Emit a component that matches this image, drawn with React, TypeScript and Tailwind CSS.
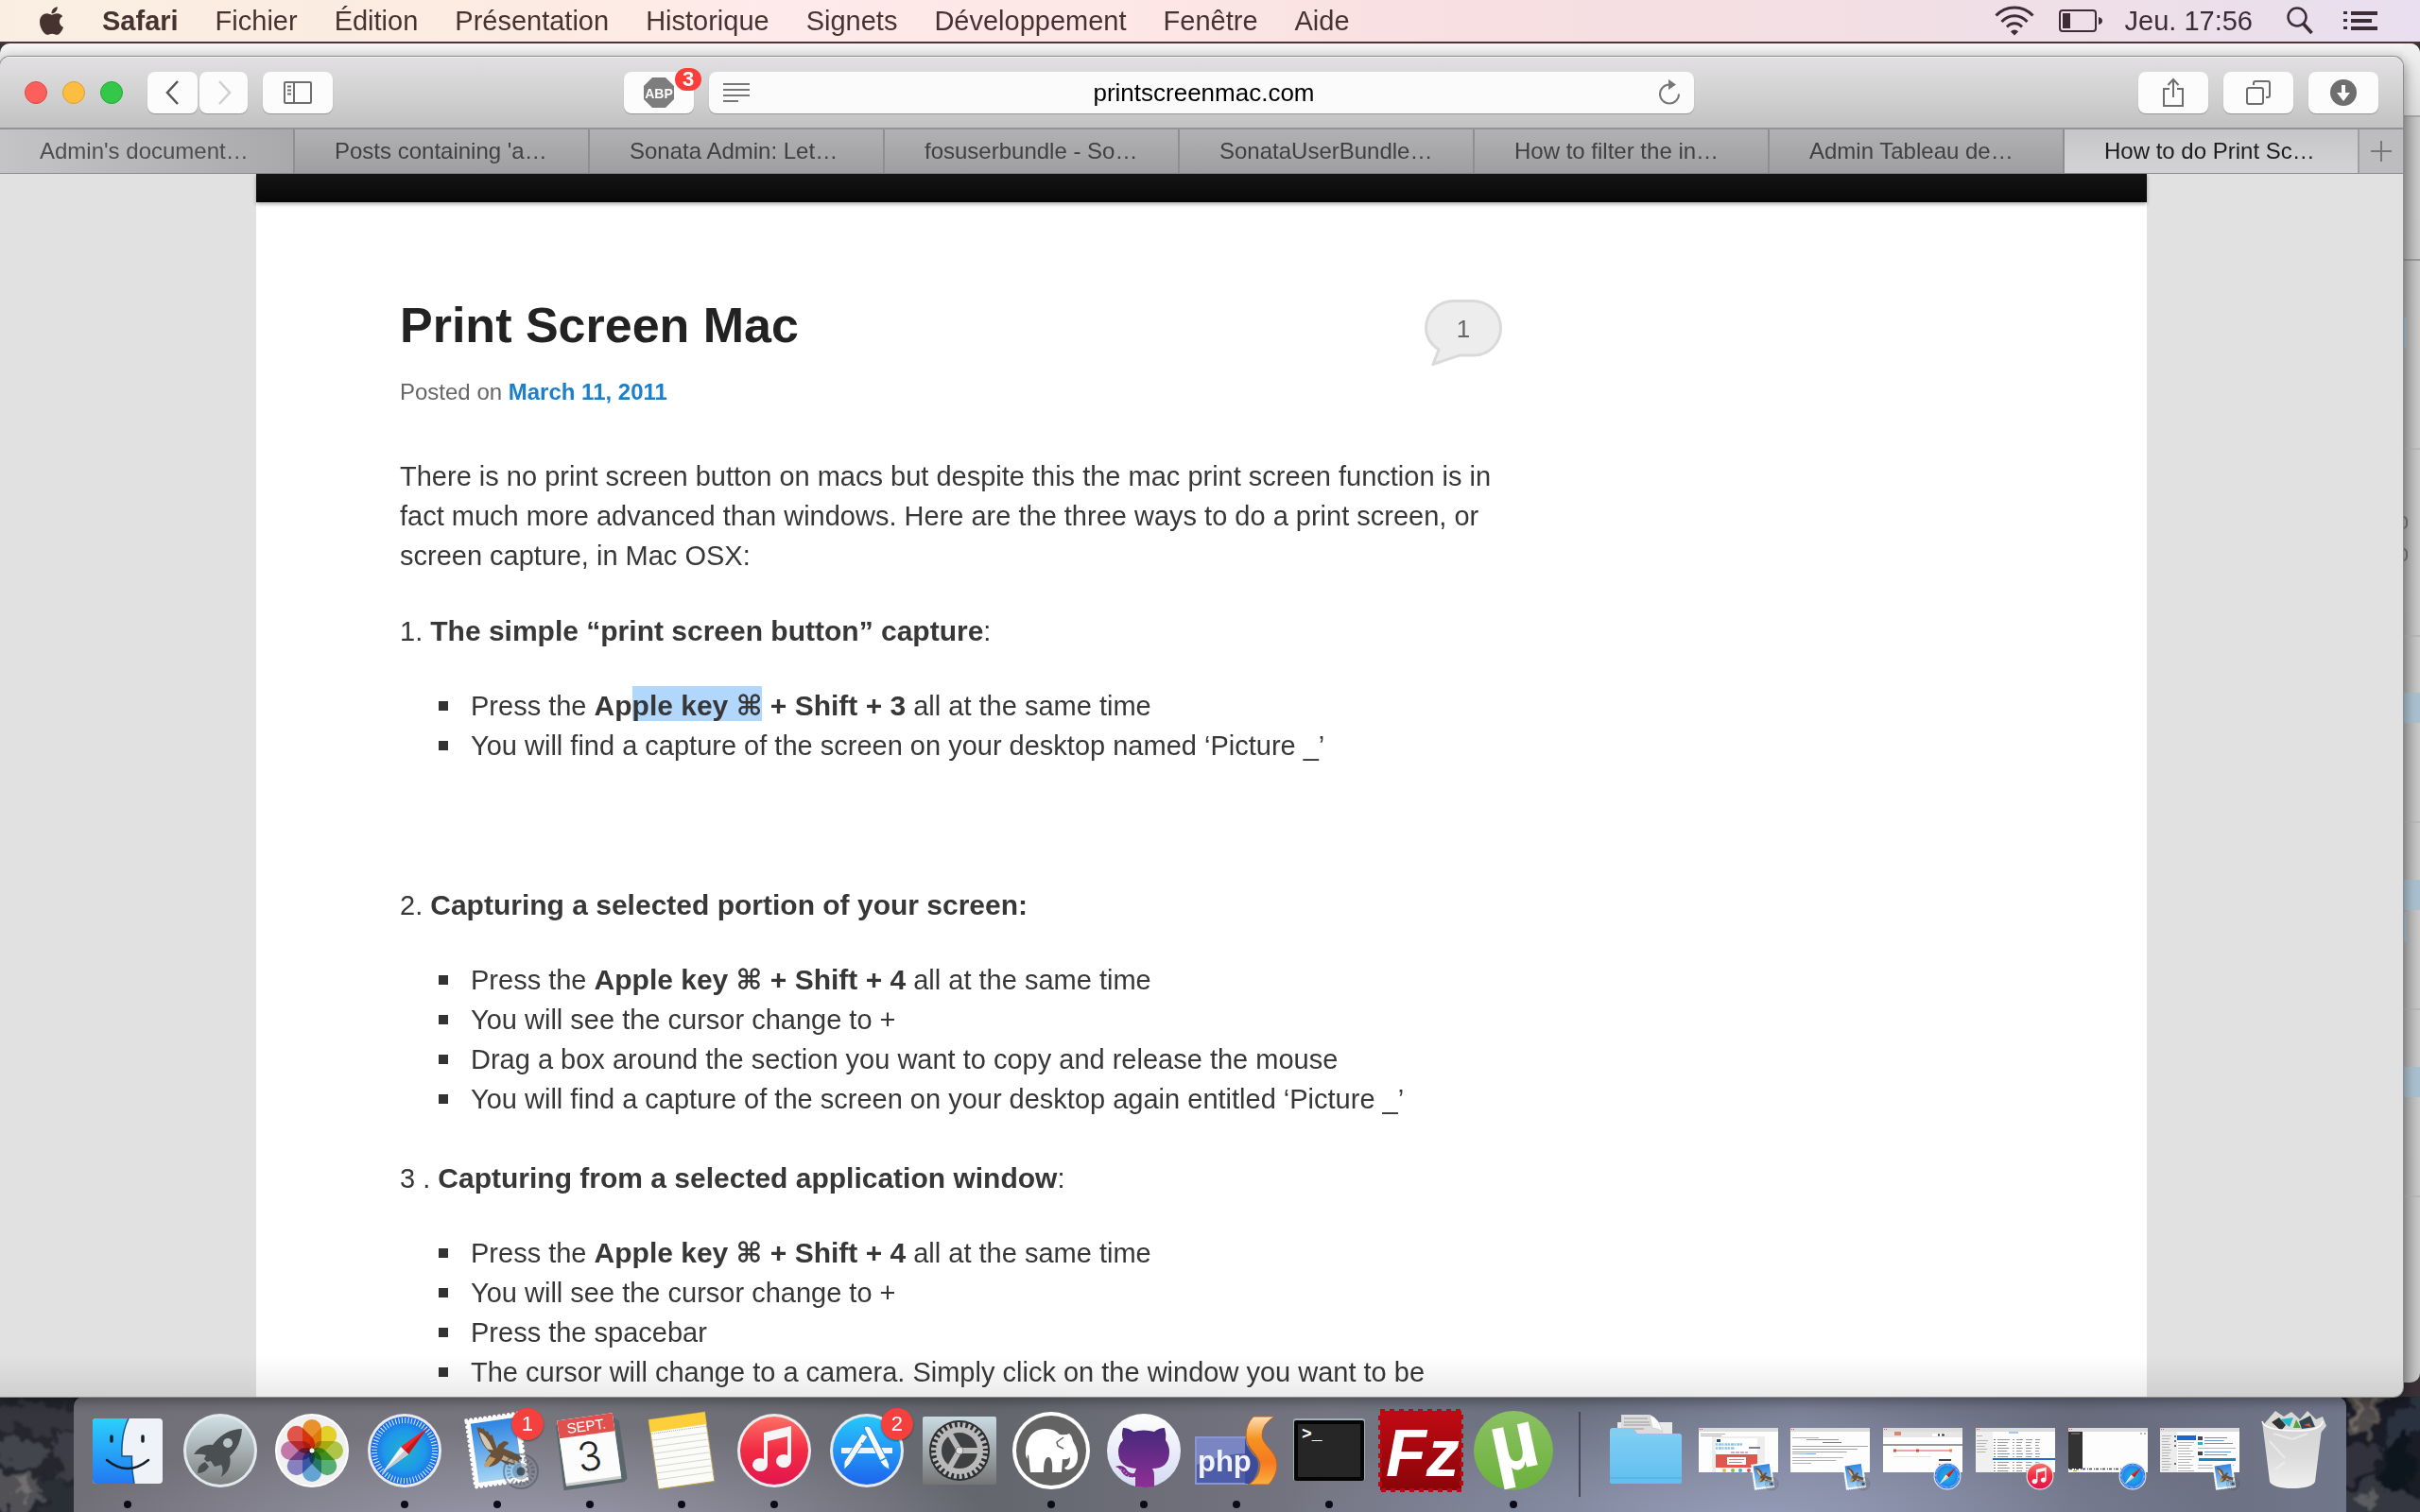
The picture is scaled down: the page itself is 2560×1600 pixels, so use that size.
import React from "react";
import { FaApple } from "react-icons/fa";

const MENUS = ["Fichier", "Édition", "Présentation", "Historique", "Signets", "Développement", "Fenêtre", "Aide"];

const TABS = [
  "Admin's document…",
  "Posts containing 'a…",
  "Sonata Admin: Let…",
  "fosuserbundle - So…",
  "SonataUserBundle…",
  "How to filter the in…",
  "Admin Tableau de…",
  "How to do Print Sc…",
];

/* ---------- Menu bar ---------- */

function MenuBar() {
  return (
    <header className="flex h-[46px] shrink-0 items-center justify-between border-b-2 border-[#4f3338] bg-[linear-gradient(90deg,#faeee2_0%,#fcebe2_22%,#feeaea_32%,#fde6e5_48%,#f8dfe1_60%,#f3dfe4_75%,#eedfe8_88%,#e8dff0_100%)] pl-[40px] pr-[45px] text-[29px] leading-none text-[#46332f]">
      <nav aria-label="Menus" className="flex items-center gap-[39px]">
        <button aria-label="Apple">
          <FaApple className="h-[34px] w-[29px]" />
        </button>
        <button className="font-bold">Safari</button>
        {MENUS.map((m) => (
          <button key={m}>{m}</button>
        ))}
      </nav>
      <div className="flex items-center text-[#3d2c36]">
        <svg width="42" height="32" viewBox="0 0 42 32" fill="none" stroke="currentColor" strokeWidth="3">
          <path d="M1.5 10.5C12-1 30-1 40.5 10.5" />
          <path d="M7.500 17C15 8.500 27 8.500 34.500 17" />
          <path d="M13 22.500C17.500 17.500 24.500 17.500 29 22.500" />
          <path d="M17 27.500a5 5 0 0 1 8 0l-4 4z" fill="currentColor" stroke="none" />
        </svg>
        <svg className="ml-[26px]" width="46" height="24" viewBox="0 0 46 24">
          <rect x="1" y="1" width="38" height="22" rx="3" fill="none" stroke="currentColor" strokeWidth="2" />
          <rect x="4" y="4" width="8" height="16" fill="currentColor" />
          <path d="M42 8q4 1 4 4t-4 4z" fill="currentColor" />
        </svg>
        <span className="ml-[24px]">Jeu. 17:56</span>
        <svg className="ml-[35px]" width="30" height="30" viewBox="0 0 30 30" fill="none" stroke="currentColor">
          <circle cx="12" cy="11" r="9.500" strokeWidth="2.500" />
          <path d="M18.500 18 27.500 28" strokeWidth="3.500" />
        </svg>
        <svg className="ml-[31px]" width="36" height="22" viewBox="0 0 36 22" fill="currentColor">
          <path d="M0 1h4v3H0zM8 1h28v4H8zM0 9h4v3H0zM8 9h22v4H8zM0 17h4v3H0zM8 17h28v4H8z" />
        </svg>
      </div>
    </header>
  );
}

/* ---------- Window behind ---------- */

function BackWindow() {
  const row = "h-[198px] border-t-2 border-[#b8b8b8]";
  const blue = "bg-[#abc0cf]";
  return (
    <div className="col-start-1 row-start-1 mb-[15px] flex justify-end overflow-hidden rounded-[10px] bg-[linear-gradient(#f6f6f6_0px,#e8e8e8_14px,#eeeeee_30px,#cacaca_80px,#c8c8c8_100%)]">
      <div className="flex w-[18px] flex-col bg-[linear-gradient(90deg,#00000022,#00000000)]">
        <div className="h-[76px] bg-[linear-gradient(#f2f2f2,#dcdcdc)]" />
        <div className="h-[152px] border-t-2 border-[#a8a8a8] bg-[#00000000]" />
        <div className="h-[200px] border-t-2 border-[#999] pt-[60px]">
          <div className={`h-[32px] w-[4px] ${blue}`} />
        </div>
        <div className={`${row} pt-[70px]`}>
          <div className="h-[14px] w-[5px] rounded-r-[5px] border-2 border-l-0 border-[#777]" />
          <div className="mt-[20px] h-[14px] w-[5px] rounded-r-[5px] border-2 border-l-0 border-[#777]" />
        </div>
        <div className={`${row} pt-[59px]`}>
          <div className={`h-[32px] ${blue}`} />
        </div>
        <div className={`${row} pt-[60px]`}>
          <div className={`h-[32px] ${blue}`} />
          <div className={`mt-[2px] h-[32px] w-[4px] ${blue}`} />
        </div>
        <div className={`${row} pt-[60px]`}>
          <div className={`h-[32px] ${blue}`} />
        </div>
        <div className={row} />
      </div>
    </div>
  );
}

/* ---------- Safari toolbar and tabs ---------- */

const BTN = "flex h-[44px] items-center justify-center rounded-[8px] bg-[#fcfcfc] text-[#6e6e6e] shadow-[0_1px_1px_#00000040]";

function Toolbar() {
  return (
    <div className="grid h-[77px] shrink-0 grid-cols-[660fr_1132fr_750fr] items-center border-b-2 border-t border-b-[#949394] border-t-[#f4f4f4] bg-[linear-gradient(#e1dfe1,#d3d2d3_50%,#c3c2c3)]">
      <div className="flex items-center pl-[26px]">
        <div className="flex gap-[16px]">
          <button aria-label="Close" className="size-[24px] rounded-full border border-[#de4643] bg-[#fd605c]" />
          <button aria-label="Minimize" className="size-[24px] rounded-full border border-[#dd9e33] bg-[#fdbd40]" />
          <button aria-label="Zoom" className="size-[24px] rounded-full border border-[#1faa30] bg-[#34c84a]" />
        </div>
        <button aria-label="Back" className={`${BTN} ml-[26px] w-[53px]`}>
          <svg width="16" height="26" viewBox="0 0 16 26" fill="none" stroke="#555" strokeWidth="2.500">
            <path d="M13 1 2 13l11 12" />
          </svg>
        </button>
        <button aria-label="Forward" className={`${BTN} ml-[2px] w-[51px]`}>
          <svg width="16" height="26" viewBox="0 0 16 26" fill="none" stroke="#cfcfcf" strokeWidth="2.500">
            <path d="M3 1 14 13 3 25" />
          </svg>
        </button>
        <button aria-label="Sidebar" className={`${BTN} ml-[16px] w-[74px]`}>
          <svg width="30" height="24" viewBox="0 0 30 24" fill="none" stroke="currentColor" strokeWidth="2">
            <rect x="1" y="1" width="28" height="22" rx="1" />
            <path d="M11 1v22M4 5.500h4M4 9.500h4M4 13.500h4" />
          </svg>
        </button>
      </div>
      <div className="flex items-center gap-[16px]">
        <button aria-label="Adblock Plus" className={`${BTN} relative w-[74px] shrink-0`}>
          <svg width="34" height="34" viewBox="0 0 34 34">
            <path d="M10 1h14l9 9v14l-9 9H10l-9-9V10z" fill="#7d7d7d" />
            <text x="17" y="22.500" textAnchor="middle" fontSize="14" fontWeight="700" fill="#fff">ABP</text>
          </svg>
          <span className="absolute -right-[8px] -top-[4px] flex h-[24px] w-[28px] items-center justify-center rounded-full bg-[#fc3d39] text-[22px] font-bold leading-none text-white">3</span>
        </button>
        <div className="relative flex h-[44px] flex-1 items-center rounded-[8px] bg-[#fbfbfb] shadow-[0_1px_1px_#00000040]">
          <svg className="ml-[15px] shrink-0" width="28" height="22" viewBox="0 0 28 22" stroke="#777" strokeWidth="2">
            <path d="M0 2h28M0 8h28M0 14h28M0 20h16" />
          </svg>
          <input aria-label="Address" defaultValue="printscreenmac.com" className="min-w-0 flex-1 bg-transparent text-center text-[26px] leading-none text-black outline-none" />
          <button aria-label="Reload" className="mr-[14px] shrink-0">
            <svg width="24" height="28" viewBox="0 0 24 28" fill="none" stroke="#777" strokeWidth="2">
              <path d="M12 5.500A10 10 0 1 0 22 15.500" />
              <path d="M11 0v11l8-5.500z" fill="#777" stroke="none" />
            </svg>
          </button>
        </div>
      </div>
      <div className="flex justify-end gap-[16px] pr-[26px]">
        <button aria-label="Share" className={`${BTN} w-[74px]`}>
          <svg width="24" height="32" viewBox="0 0 24 32" fill="none" stroke="currentColor" strokeWidth="2">
            <path d="M8 12H2v18h20V12h-6M12 21V3M6.500 8 12 2l5.500 6" />
          </svg>
        </button>
        <button aria-label="Show all tabs" className={`${BTN} w-[74px]`}>
          <svg width="26" height="26" viewBox="0 0 26 26" fill="none" stroke="currentColor" strokeWidth="2">
            <rect x="1" y="8" width="17" height="17" rx="2" />
            <path d="M8 5V3q0-2 2-2h13q2 0 2 2v13q0 2-2 2h-2" />
          </svg>
        </button>
        <button aria-label="Downloads" className={`${BTN} w-[74px]`}>
          <svg width="28" height="28" viewBox="0 0 28 28">
            <circle cx="14" cy="14" r="14" fill="#6e6e6e" />
            <path d="M12 6h4v8h5l-7 9-7-9h5z" fill="#fff" />
          </svg>
        </button>
      </div>
    </div>
  );
}

function TabBar() {
  return (
    <div className="flex h-[47px] shrink-0 border-b border-[#8a8a8a] bg-[linear-gradient(#b1b0b2,#9f9ea0)] text-[24px] leading-none">
      <div role="tablist" aria-label="Tabs" className="flex flex-1">
        {TABS.map((t, i) => {
          const active = i === TABS.length - 1;
          const tone = active
            ? "text-[#1c1c1c] bg-[linear-gradient(#c6c5c7,#d3d2d4)]"
            : i === 0
              ? "text-[#4d4d50] bg-[linear-gradient(90deg,#c4c3c6,#a9a8aa)] border-r-2"
              : "text-[#404043] border-r-2";
          return (
            <button key={t} role="tab" aria-selected={active} className={`flex-1 whitespace-nowrap border-[#8f8e90] pl-[42px] text-left ${tone}`}>
              {t}
            </button>
          );
        })}
      </div>
      <button aria-label="New tab" className="flex w-[48px] items-center justify-center border-l-2 border-[#a09fa1] bg-[#bdbcbe]">
        <svg width="22" height="22" viewBox="0 0 22 22" stroke="#777" strokeWidth="2">
          <path d="M11 0v22M0 11h22" />
        </svg>
      </button>
    </div>
  );
}

/* ---------- Article ---------- */

function Strong({ children }: { children: React.ReactNode }) {
  return <strong className="text-[30px]">{children}</strong>;
}

function Steps({ children }: { children: React.ReactNode }) {
  return <ul className="mt-[37px] pl-[41px]">{children}</ul>;
}

function Step({ children }: { children: React.ReactNode }) {
  return (
    <li className="flex h-[42px] items-center whitespace-nowrap">
      <span aria-hidden className="mr-[24px] size-[10px] shrink-0 bg-[#333]" />
      <span>{children}</span>
    </li>
  );
}

function Article() {
  return (
    <main className="mx-auto w-[2000px] max-w-full bg-white">
      <div className="h-[30px] bg-[linear-gradient(#141414,#080808)] shadow-[0_2px_4px_#00000055]" />
      <article className="ml-[152px] w-[1190px] text-[29px] leading-[42px] text-[#373737]">
        <div className="flex items-start justify-between pt-[100px]">
          <h1 className="text-[52px] font-bold leading-[60px] text-[#222]">Print Screen Mac</h1>
          <a href="#comments" aria-label="1 comment" className="relative mr-[24px] mt-[3px]">
            <svg width="82" height="70" viewBox="0 0 82 70">
              <path d="M32 1.500H50C68 1.500 80.500 14 80.500 30S68 59 52 59H37L9 68.500 15 53C6 47 1.500 39 1.500 30 1.500 14 14 1.500 32 1.500z" fill="#ededed" stroke="#dadada" strokeWidth="3" />
            </svg>
            <span className="absolute inset-x-0 top-[10px] text-center text-[26px] text-[#666]">1</span>
          </a>
        </div>
        <p className="mt-[10px] text-[24px] leading-[36px] text-[#666]">
          Posted on <a href="#date" className="font-bold text-[#1b7fcc]">March 11, 2011</a>
        </p>
        <p className="mt-[50px] whitespace-nowrap">
          There is no print screen button on macs but despite this the mac print screen function is in
          <br />
          fact much more advanced than windows. Here are the three ways to do a print screen, or
          <br />
          screen capture, in Mac OSX:
        </p>
        <p className="mt-[38px]">
          1. <Strong>The simple “print screen button” capture</Strong>:
        </p>
        <Steps>
          <Step>
            Press the <Strong>Ap<span className="bg-[#b2d7fd] pt-[4px]">ple key ⌘</span> + Shift + 3</Strong> all at the same time
          </Step>
          <Step>You will find a capture of the screen on your desktop named ‘Picture _’</Step>
        </Steps>
        <p className="mt-[127px]">
          2. <Strong>Capturing a selected portion of your screen:</Strong>
        </p>
        <Steps>
          <Step>
            Press the <Strong>Apple key ⌘ + Shift + 4</Strong> all at the same time
          </Step>
          <Step>You will see the cursor change to +</Step>
          <Step>Drag a box around the section you want to copy and release the mouse</Step>
          <Step>You will find a capture of the screen on your desktop again entitled ‘Picture _’</Step>
        </Steps>
        <p className="mt-[42px]">
          3 . <Strong>Capturing from a selected application window</Strong>:
        </p>
        <Steps>
          <Step>
            Press the <Strong>Apple key ⌘ + Shift + 4</Strong> all at the same time
          </Step>
          <Step>You will see the cursor change to +</Step>
          <Step>Press the spacebar</Step>
          <Step>The cursor will change to a camera. Simply click on the window you want to be</Step>
        </Steps>
      </article>
    </main>
  );
}

/* ---------- Dock icons: each is drawn around the origin, about 78 units wide ---------- */

function Finder() {
  return (
    <g>
      <rect x="-37" y="-34" width="74" height="69" rx="4" fill="#eff3f8" />
      <path d="M1-34H-33q-4 0-4 4v61q0 4 4 4H7Q4 20 4 6H-6Q-7-18 1-34z" fill="url(#finder)" />
      <path d="M1-34Q-7-18-6 6H4.500Q4 20 7 35" fill="none" stroke="#14548c" strokeWidth="1.500" />
      <path d="M-17-15v5M16-15v5" stroke="#14202c" strokeWidth="3.500" strokeLinecap="round" />
      <path d="M-22 10Q0 28 22 10" fill="none" stroke="#14202c" strokeWidth="2.500" strokeLinecap="round" />
    </g>
  );
}

function Launchpad() {
  return (
    <g>
      <circle r="39" fill="#dfe9ee" />
      <circle r="36" fill="url(#launch)" />
      <path d="M23-23Q5-23-8-6-20-8-28 4q8-1 13 1L-17 9l3 3 4-1 4 6 7-2q3 5 0 13Q13 20 10 6 22-5 23-23z" fill="#4a4f51" />
      <path d="M-16 12q-8 3-8 12 8 0 12-7z" fill="#4a4f51" />
      <circle cx="8" cy="-8" r="5" fill="#b7c4c8" />
    </g>
  );
}

const PETALS = ["#f79a2e", "#f1dc2d", "#b9d14b", "#5cb87a", "#6aaee0", "#8f86c9", "#cf7fb4", "#ec5a4d"];

function Photos() {
  return (
    <g>
      <circle r="39" fill="#fff" />
      <circle r="37" fill="#f1f1f1" />
      {PETALS.map((c, i) => (
        <rect key={c} x="-10" y="-33" width="20" height="33" rx="10" fill={c} transform={`rotate(${i * 45})`} style={{ mixBlendMode: "multiply" }} />
      ))}
      <circle r="2.500" fill="#fff" />
    </g>
  );
}

function Safari() {
  return (
    <g>
      <circle r="39" fill="#e9eaec" />
      <circle r="36" fill="url(#safari)" />
      <circle r="32" fill="none" stroke="#d9f0ff" strokeWidth="6" strokeDasharray="1 2.351" />
      <path d="M24-24 4 4-4-4z" fill="#f0262c" />
      <path d="M24-24 4 4 0 0z" fill="#c2161c" />
      <path d="M-24 24-4-4 4 4z" fill="#f4f4f4" />
      <path d="M-24 24 0 0 4 4z" fill="#c5c8cc" />
    </g>
  );
}

function Mail() {
  return (
    <g>
      <g transform="rotate(-8)">
        <rect x="-28" y="-36" width="55" height="71" fill="#fff" />
        <rect x="-28" y="-36" width="55" height="71" fill="none" stroke="#fff" strokeWidth="4" strokeDasharray="0 5" strokeLinecap="round" />
        <rect x="-24" y="-32" width="47" height="63" fill="url(#mail)" />
        <path d="M-18-28q3 3 3 0 2 5 4 2 1 6 4 4 1 6 4 5l3 15q2-5 5-5 3-3 6-1 3 1 1 3-4 1-5 4 8 4 15 9l3 4-4 1 1 3-5-1-1 3-5-3-2 2-7-6q-5 5-14 5l4-3-6 1 5-4-5 0q3-5 7-8Q-17-9-18-28z" fill="#6a5138" />
        <path d="M-16-22q5 3 9 12l3 9-6-2Q-15-11-16-22z" fill="#d5c6b2" />
        <path d="M-3 8q-4 6-12 8l-1-3 7-8z" fill="#c39a63" />
        <path d="M6 6q7 6 14 8l-1 3Q11 14 3 10z" fill="#bba98f" />
      </g>
      <circle cx="25" cy="22" r="18" fill="none" stroke="#44505f" strokeOpacity=".5" strokeWidth="2" />
      <circle cx="25" cy="22" r="13" fill="none" stroke="#44505f" strokeOpacity=".45" strokeWidth="4" strokeDasharray="2 2" />
      <circle cx="25" cy="22" r="9" fill="#44505f" fillOpacity=".35" />
      <circle cx="25" cy="22" r="4.500" fill="#30404f" fillOpacity=".8" />
    </g>
  );
}

function CalendarIcon() {
  return (
    <g transform="rotate(-8)">
      <path d="M-32-31h62l5 4v62l-4 3h-64z" fill="#59676b" />
      <rect x="-30" y="-36" width="59" height="70" fill="#d0d2d2" />
      <rect x="-30" y="-36" width="59" height="67" fill="#fcfcfc" />
      <rect x="-30" y="-36" width="59" height="19" fill="#e2504d" />
      <text x="0" y="-21" textAnchor="middle" fontSize="15" fill="#fff">SEPT.</text>
      <text x="-1" y="21" textAnchor="middle" fontSize="42" fill="#222" fontFamily="Inter, sans-serif" fontWeight="300">3</text>
    </g>
  );
}

function Notes() {
  return (
    <g transform="rotate(-8)">
      <rect x="-30" y="-37" width="60" height="74" fill="#fbfbf8" stroke="#b59a4b" strokeWidth="1" />
      <rect x="-30" y="-37" width="60" height="13" fill="#fdcf3a" />
      <path d="M-30-22h60" stroke="#aaa" strokeDasharray="1 1" />
      <path d="M-30-15h60M-30-8h60M-30-1h60M-30 6h60M-30 13h60M-30 20h60M-30 27h60" stroke="#d5d5d5" strokeWidth="1" />
    </g>
  );
}

function Music() {
  return (
    <g>
      <circle r="39" fill="#ececee" />
      <circle r="36" fill="url(#music)" />
      <path d="M-11-19 18-26V11a8 7 0 1 1-4-6v-20L-7-10v25a8 7 0 1 1-4-6z" fill="#f6f4f5" />
    </g>
  );
}

function AppStore() {
  return (
    <g>
      <circle r="39" fill="#e6e9ee" />
      <circle r="36" fill="url(#store)" />
      <path d="M-27-3h54v6h-54z" fill="#eef4fb" />
      <path d="M-5-18 1-15-18 14l-6 6 0-8z" fill="#f6f9fc" stroke="#2590ef" strokeWidth="1" />
      <path d="M-3-24q3-4 7 0L21 9q3 5 3 11-6-2-9-7z" fill="#f6f9fc" stroke="#2590ef" strokeWidth="1" />
      <path d="M14 11 20 8M-6-8-1-5" stroke="#2590ef" strokeWidth="1.500" />
    </g>
  );
}

function Preferences() {
  return (
    <g>
      <rect x="-39" y="-36" width="78" height="72" rx="2" fill="url(#prefs)" />
      <circle r="32" fill="#2e2f31" />
      <circle r="27" fill="none" stroke="#bdbdbd" strokeWidth="6" strokeDasharray="3 2.655" />
      <circle r="22" fill="#3f4042" stroke="#b9b9b9" strokeWidth="6" />
      <path d="M0 0H22M0 0-11-19M0 0-11 19" stroke="#b9b9b9" strokeWidth="6" />
      <circle r="4" fill="#dedede" stroke="#888" />
    </g>
  );
}

function Elephant() {
  return (
    <g>
      <circle r="41" fill="#fff" />
      <circle r="37" fill="#636363" />
      <path d="M-27 0C-26-16-17-23-5-23q9 0 14 6 7 1 10-1 3 2 4 8 4 6 5 13 1 14-9 17-4 1-5-2 6-2 6-11-3 3-8 2l-1 14H1q1-16-4-16t-5 16h-14L-24 4q-2 2-1 5-3-4-2-9z" fill="#fff" />
      <path d="M13-14 6-9 7-5 13-2" fill="none" stroke="#636363" strokeWidth="1.500" />
    </g>
  );
}

function Octocat() {
  return (
    <g>
      <circle r="39" fill="url(#octobg)" />
      <path d="M-22-24q6 0 11 4 11-3 22 0 5-4 11-4 2 7 1 13 4 6 4 12 0 18-18 18 2 3 2 8v11q-10 2-20 0V28q-10 2-14-5-2-4-7-6 7-3 11 2 3 6 9 5l2-5Q-27 18-27 1q0-7 5-12-2-6 0-13z" fill="url(#octo)" />
      <path d="M-28 19q7 1 10 6t9 4" fill="none" stroke="#fff" strokeOpacity=".6" strokeDasharray="1 2.500" strokeWidth="2" />
    </g>
  );
}

function PhpStorm() {
  return (
    <g>
      <rect x="-43" y="-14" width="54" height="49" fill="#4d5da9" stroke="#8a96cf" strokeWidth="2" />
      <path d="M-42-13h53v16q-24 0-53 12z" fill="#98a2d6" opacity=".6" />
      <path d="M9-14q2 14 12 22 6 10-6 27H9z" fill="#3c4c98" />
      <text x="-41" y="22" fontSize="31" fontWeight="700" fill="#f2f3fa">php</text>
      <path d="M18-36H40Q27-28 27-16C28-4 43 0 43 16Q42 28 34 36H13Q25 28 25 15C24 4 10-2 10-16Q10-28 18-36z" fill="url(#storm)" stroke="#b5622a" strokeWidth="1" />
    </g>
  );
}

function Terminal() {
  return (
    <g>
      <rect x="-38" y="-34" width="76" height="66" rx="3" fill="#9fb0b6" />
      <rect x="-37" y="-32" width="74" height="64" rx="2" fill="#050505" />
      <rect x="-33" y="-28" width="66" height="56" fill="#262626" />
      <text x="-29" y="-12" fontSize="18" fontWeight="700" fill="#fff" fontFamily="Liberation Mono, monospace">&gt;_</text>
    </g>
  );
}

function FileZilla() {
  return (
    <g>
      <rect x="-43" y="-42" width="86" height="84" fill="url(#fz)" />
      <rect x="-43" y="-42" width="86" height="84" fill="none" stroke="#b90a12" strokeWidth="4" strokeDasharray="5 5" />
      <text x="-37" y="27" fontSize="70" fontWeight="700" fontStyle="italic" fill="#fff">Fz</text>
    </g>
  );
}

function Torrent() {
  return (
    <g>
      <circle r="42" fill="url(#torrent)" />
      <text transform="rotate(-12)" x="2" y="20" textAnchor="middle" fontSize="88" fontWeight="700" fill="#fff">µ</text>
    </g>
  );
}

function Folder() {
  return (
    <g>
      <path d="M-30-30h58v24h-58z" fill="#e9e9e9" />
      <path d="M-26-38H4l14 18v14h-44z" fill="#dcdcdc" />
      <path d="M4-38q10 4 14 18-6-4-11-4z" fill="#fafafa" stroke="#bbb" strokeWidth=".5" />
      <path d="M-23-34H2M-23-30H4M-23-27H5M-20-23h18" stroke="#999" strokeWidth="1" />
      <path d="M-38-21q0-3 3-3h19q3 0 5 3l2 3h44q3 0 3 3v47q0 3-3 3h-70q-3 0-3-3z" fill="#83cdf1" />
      <path d="M-38-15h76v47q0 3-3 3h-70q-3 0-3-3z" fill="url(#folder)" />
      <path d="M-38 29h76" stroke="#4ea9d6" strokeWidth="1" />
    </g>
  );
}

function Trash() {
  return (
    <g>
      <path d="M-31-27-18-42l9 6 8-5 9 8 8-9 9 9 7-3 4 10-10 12h-44z" fill="#d9d9d6" />
      <path d="M-22-30l8-5 7 8-5 6z" fill="#333" />
      <path d="M-13-33l14-2-4 10z" fill="#28b6c9" />
      <path d="M1-24l3-9 5 9z" fill="#56a33d" />
      <path d="M7-31l12-6 5 12-14 2z" fill="#345" />
      <path d="M12-27l6-2 2 4z" fill="#d35a2a" />
      <path d="M-32-31Q-30-22 0-21T32-31L24 33Q20 40 0 40T-24 33z" fill="url(#trash)" />
      <path d="M-32-31Q-30-22 0-21T32-31" fill="none" stroke="#fafafa" strokeWidth="1.500" />
      <path d="M-24-10-8 8M-20-18l20 6 16-6M-18 20l10-8" fill="none" stroke="#f5f5f5" strokeWidth="2" opacity=".6" />
    </g>
  );
}

/* Minimised windows: 84 x 47 previews with the owning application in the corner */

function Lines({ x, y, n, w, gap = 3, color = "#b5b5b5" }: { x: number; y: number; n: number; w: number; gap?: number; color?: string }) {
  return (
    <>
      {Array.from({ length: n }, (_, i) => (
        <rect key={i} x={x} y={y + i * gap} width={w - ((i * 7) % 5) * w * 0.07} height="1" fill={color} />
      ))}
    </>
  );
}

function Preview({ owner, children }: { owner: React.ReactNode; children: React.ReactNode }) {
  return (
    <g>
      <g transform="translate(-42 -24)">
        <rect width="84" height="47" fill="#fdfdfd" />
        <rect width="84" height="4" fill="#dcdcdc" />
        <path d="M1 1.500h1M3 1.500h1" stroke="#e55" />
        {children}
      </g>
      <g transform="translate(26 27) scale(.37)">{owner}</g>
    </g>
  );
}

function NewsPreview() {
  return (
    <Preview owner={<Mail />}>
      <Lines x={2} y={6} n={2} w={26} gap={2} />
      <rect x="14" y="9" width="56" height="38" fill="#ededed" />
      <rect x="18" y="11" width="44" height="36" fill="#fff" />
      <path d="M19 12h4v3h-4z" fill="#234a8c" />
      <path d="M18 17.500h28M18 21.500h20" stroke="#8fc3e3" strokeWidth="2.500" strokeDasharray="2 1 3 .5" />
      <path d="M53 21h12" stroke="#557" strokeWidth="1.500" />
      <path d="M34 26h18" stroke="#869" strokeDasharray="4 1" />
      <rect x="18" y="28" width="44" height="14" fill="#e0574b" />
      <rect x="30" y="31" width="20" height="8" fill="#fff" />
      <Lines x={32} y={33} n={2} w={16} color="#b88" />
      <circle cx="27" cy="45" r="2" fill="#f2b04e" />
      <circle cx="36" cy="45" r="2" fill="#87bb45" />
      <circle cx="44" cy="45" r="2" fill="#3ab5c0" />
      <circle cx="53" cy="45" r="2" fill="#e3485a" />
    </Preview>
  );
}

function LetterPreview() {
  return (
    <Preview owner={<Mail />}>
      <Lines x={2} y={10} n={1} w={28} />
      <Lines x={17} y={12} n={1} w={34} color="#999" />
      <Lines x={34} y={15} n={1} w={20} color="#777" />
      <Lines x={2} y={19} n={3} w={80} color="#a5a5a5" />
      <Lines x={2} y={27} n={1} w={20} />
      <Lines x={17} y={27} n={1} w={10} color="#6fa4e0" />
      <Lines x={2} y={31} n={2} w={54} />
      <Lines x={2} y={37} n={1} w={20} />
    </Preview>
  );
}

function PagePreview() {
  return (
    <Preview owner={<Safari />}>
      <rect y="4" width="84" height="6" fill="#e6e6e6" />
      <path d="M12 4h7v4h-7z" fill="#d98871" />
      <rect x="52" y="6" width="14" height="3" fill="#fff" />
      <path d="M58 7.500h2M62 7.500h3" stroke="#333" strokeWidth="2" />
      <rect y="17" width="84" height="2" fill="#999" />
      <path d="M12 24h60" stroke="#d55" />
      <path d="M11 22.500h3v3h-3zM35 22.500h3v3h-3z" fill="#e04a33" />
      <path d="M70 22.500h3v3h-3z" fill="#f08a33" />
      <Lines x={11} y={30} n={1} w={40} color="#e5e5e5" />
      <rect x="59" y="33" width="13" height="2" fill="#444" />
      <rect x="59" y="38" width="2" height="2" fill="#e04a33" />
    </Preview>
  );
}

function LibraryPreview() {
  return (
    <Preview owner={<Music />}>
      <rect x="0" y="4" width="18" height="43" fill="#f0f0f0" />
      <Lines x={1} y={8} n={1} w={6} />
      <path d="M35 5h10" stroke="#4a90e0" />
      <Lines x={1} y={13} n={5} w={12} />
      <Lines x={23} y={12} n={12} w={13} color="#999" />
      <Lines x={19} y={12} n={12} w={2} color="#777" />
      <Lines x={39} y={12} n={12} w={2} color="#999" />
      <Lines x={43} y={12} n={12} w={7} color="#999" />
      <Lines x={53} y={12} n={12} w={7} color="#999" />
      <Lines x={63} y={12} n={12} w={5} color="#999" />
      <rect x="18" y="32" width="66" height="2" fill="#1c6dd0" />
    </Preview>
  );
}

function DarkPreview() {
  return (
    <Preview owner={<Safari />}>
      <rect y="4" width="15" height="39" fill="#333" />
      <path d="M3 6h9" stroke="#888" />
      <path d="M76 6h6" stroke="#777" strokeDasharray="2 2" />
      <path d="M1 43.500h56" stroke="#444" strokeWidth="1.500" strokeDasharray="3 2 1 1" />
      <path d="M5 45.500h4" stroke="#c93" />
    </Preview>
  );
}

function InboxPreview() {
  return (
    <Preview owner={<Mail />}>
      <rect y="4" width="18" height="43" fill="#ececec" />
      <Lines x={2} y={8} n={13} w={10} />
      <path d="M15 9h2M15 14h2M15 19h2M15 38h2" stroke="#444" strokeWidth="1.500" />
      <rect x="18" y="8" width="20" height="5" fill="#1768d1" />
      <Lines x={19} y={15} n={11} w={17} />
      <path d="M40 9h5v4h-5zM40 25h5v4h-5z" fill="#445" />
      <path d="M40 15h5v3h-5z" fill="#2bb0b8" />
      <Lines x={47} y={10} n={2} w={24} color="#6b94cc" />
      <Lines x={47} y={16} n={1} w={30} color="#6b94cc" />
      <Lines x={40} y={21} n={1} w={40} />
      <Lines x={47} y={25} n={2} w={28} color="#6b94cc" />
      <rect x="41" y="32" width="39" height="3" fill="#1d86bb" />
      <Lines x={40} y={39} n={2} w={38} />
    </Preview>
  );
}

type Item = { name: string; Icon: () => React.ReactElement; running?: boolean; badge?: string };

const APPS: Item[] = [
  { name: "Finder", Icon: Finder, running: true },
  { name: "Launchpad", Icon: Launchpad },
  { name: "Photos", Icon: Photos },
  { name: "Safari", Icon: Safari, running: true },
  { name: "Mail", Icon: Mail, running: true, badge: "1" },
  { name: "Calendrier", Icon: CalendarIcon, running: true },
  { name: "Notes", Icon: Notes, running: true },
  { name: "iTunes", Icon: Music, running: true },
  { name: "App Store", Icon: AppStore, badge: "2" },
  { name: "Préférences", Icon: Preferences },
  { name: "MAMP", Icon: Elephant, running: true },
  { name: "GitHub", Icon: Octocat, running: true },
  { name: "PhpStorm", Icon: PhpStorm, running: true },
  { name: "Terminal", Icon: Terminal, running: true },
  { name: "FileZilla", Icon: FileZilla },
  { name: "uTorrent", Icon: Torrent, running: true },
];

const STACKS: Item[] = [
  { name: "Documents", Icon: Folder },
  { name: "Mail window", Icon: NewsPreview },
  { name: "Letter window", Icon: LetterPreview },
  { name: "Safari window", Icon: PagePreview },
  { name: "iTunes window", Icon: LibraryPreview },
  { name: "Editor window", Icon: DarkPreview },
  { name: "Inbox window", Icon: InboxPreview },
  { name: "Corbeille", Icon: Trash },
];

function DockItem({ name, Icon, running, badge }: Item) {
  return (
    <button aria-label={name} className="relative flex min-w-0 flex-1 flex-col items-center">
      <svg width="98" height="110" viewBox="-49 -57 98 110" className="shrink-0 overflow-visible">
        <Icon />
      </svg>
      {running && <span className="size-[8px] rounded-full bg-[#0a0a18]" />}
      {badge && (
        <span className="absolute right-0 top-[12px] flex size-[34px] items-center justify-center rounded-full bg-[#f5403e] text-[22px] leading-none text-white shadow-[0_1px_2px_#00000066]">
          {badge}
        </span>
      )}
    </button>
  );
}

function Gradient({ id, stops }: { id: string; stops: string[] }) {
  return (
    <linearGradient id={id} x1="0" y1="0" x2="0" y2="1">
      {stops.map((c, i) => (
        <stop key={c} offset={i / (stops.length - 1)} stopColor={c} />
      ))}
    </linearGradient>
  );
}

function Gradients() {
  return (
    <svg width="0" height="0" className="absolute" aria-hidden>
      <defs>
        <Gradient id="finder" stops={["#2bd0fb", "#2279f2"]} />
        <Gradient id="launch" stops={["#cfdfe4", "#7e807f"]} />
        <radialGradient id="safari">
          <stop offset="0" stopColor="#22b3c9" />
          <stop offset=".6" stopColor="#1e98ea" />
          <stop offset="1" stopColor="#1b64e6" />
        </radialGradient>
        <Gradient id="mail" stops={["#2f84e0", "#a4d4f4"]} />
        <Gradient id="music" stops={["#fd7066", "#f22b44", "#e3154f"]} />
        <Gradient id="store" stops={["#27c8fa", "#1e64ee"]} />
        <Gradient id="prefs" stops={["#c9dbe2", "#757575"]} />
        <Gradient id="octobg" stops={["#ffffff", "#d5daf2"]} />
        <Gradient id="octo" stops={["#45297a", "#8f2f96"]} />
        <Gradient id="storm" stops={["#fbe0b8", "#f6931f", "#f57a20", "#fbb040"]} />
        <Gradient id="fz" stops={["#c00a14", "#8a0509"]} />
        <Gradient id="torrent" stops={["#8bc163", "#6cb13c"]} />
        <Gradient id="folder" stops={["#7bcdf4", "#62bfee"]} />
        <Gradient id="trash" stops={["#d4d4d4", "#dcdbdb", "#f0f0f0"]} />
        <filter id="rough" x="-20%" y="-20%" width="140%" height="140%">
          <feTurbulence type="fractalNoise" baseFrequency=".06" numOctaves="4" seed="7" result="n" />
          <feDisplacementMap in="SourceGraphic" in2="n" scale="34" xChannelSelector="R" yChannelSelector="G" />
          <feGaussianBlur stdDeviation="1" />
        </filter>
      </defs>
    </svg>
  );
}

function Rocks({ right }: { right?: boolean }) {
  return right ? (
    <svg className="h-full min-w-0 flex-1" viewBox="0 0 78 122" preserveAspectRatio="none" aria-hidden>
      <rect width="78" height="122" fill="#1a1c26" />
      <g filter="url(#rough)">
        <path d="M2-10h46L36 22 22 40 6 34z" fill="#4f4c4b" />
        <path d="M12-8h8l-6 38-6-4zM30-8h10L26 30z" fill="#746c66" />
        <path d="M48 20 88-10v36L60 52 40 56z" fill="#2b3040" />
        <path d="M-10 60l32-14 14 10-8 24-38 12z" fill="#30333d" />
        <path d="M40 60l18-22 14 20-4 44-30 6z" fill="#0e121a" />
        <path d="M-10 100l40-12 26 18 32-4v30H-10z" fill="#343841" />
        <path d="M6 108l20-10 10 12-16 6z" fill="#5c5d60" />
      </g>
    </svg>
  ) : (
    <svg className="h-full min-w-0 flex-1" viewBox="0 0 78 122" preserveAspectRatio="none" aria-hidden>
      <rect width="78" height="122" fill="#25262e" />
      <g filter="url(#rough)">
        <path d="M-10 4l40 6 58 2v20L52 40 20 30-10 38z" fill="#34353d" />
        <path d="M-10 44l36-6 30 20-20 16-46-8z" fill="#43444b" />
        <path d="M56 44l32-8v40L64 88z" fill="#3c3d46" />
        <path d="M-10 78l44 4 20 22-24 18h-40z" fill="#515156" />
        <path d="M40 84l48 6v42H50z" fill="#2c2d36" />
        <path d="M8 86l20 4 8 12-14 4z" fill="#727071" />
      </g>
    </svg>
  );
}

function Dock() {
  return (
    <footer className="flex h-[122px] shrink-0 bg-[#1c1d26]">
      <Rocks />
      <nav
        aria-label="Dock"
        className="flex rounded-t-[10px] bg-[radial-gradient(ellipse_500px_110px_at_20%_115%,#9a99ab,#9a99ab00),radial-gradient(ellipse_500px_120px_at_74%_105%,#949bb6,#949bb600),linear-gradient(90deg,#706f78,#77767f_20%,#64666e_40%,#757582_55%,#6c7281_66%,#7a8096_76%,#676b7c_88%,#71778a)] px-[8px]"
      >
        <div className="flex w-[1564px]">
          {APPS.map((a) => (
            <DockItem key={a.name} {...a} />
          ))}
        </div>
        <span className="mx-[20px] mt-[16px] h-[90px] w-[2px] bg-[#454959]" />
        <div className="flex w-[782px]">
          {STACKS.map((a) => (
            <DockItem key={a.name} {...a} />
          ))}
        </div>
      </nav>
      <Rocks right />
    </footer>
  );
}

export default function App() {
  return (
    <div className="flex h-screen flex-col overflow-hidden bg-[#3a3137] font-['Liberation_Sans','DejaVu_Sans',sans-serif]">
      <Gradients />
      <MenuBar />
      <div className="grid min-h-0 flex-1 grid-cols-1 grid-rows-1">
        <BackWindow />
        <section className="relative col-start-1 row-start-1 mr-[18px] mt-[14px] flex min-h-0 flex-col overflow-hidden rounded-[10px] rounded-bl-none bg-[#e1e1e1] shadow-[0_0_0_1px_#8d8d8d,2px_4px_14px_#00000066]">
          <Toolbar />
          <TabBar />
          <div className="flex min-h-0 flex-1 overflow-hidden">
            <Article />
          </div>
          <div className="pointer-events-none absolute inset-x-0 bottom-0 h-[44px] bg-[linear-gradient(#00000000,#00000014)]" />
        </section>
      </div>
      <Dock />
    </div>
  );
}
